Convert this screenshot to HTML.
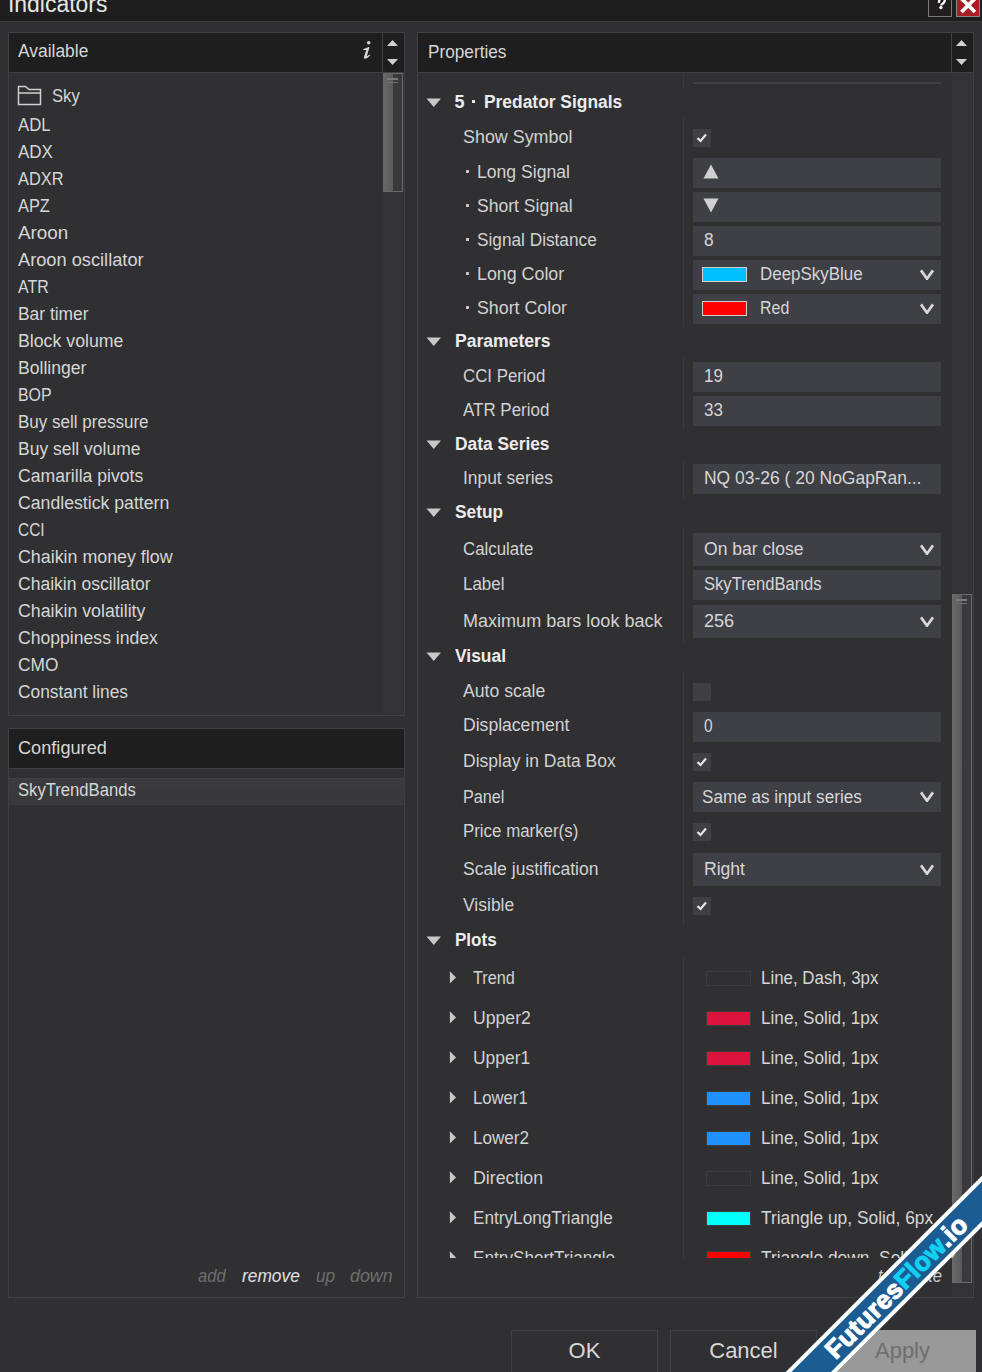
<!DOCTYPE html>
<html><head><meta charset="utf-8"><style>
html,body{margin:0;padding:0}
body{width:982px;height:1372px;background:#303032;position:relative;overflow:hidden;font-family:"Liberation Sans",sans-serif}
.t{position:absolute;font-family:"Liberation Sans",sans-serif;white-space:nowrap;line-height:20px}
.r{position:absolute}
</style></head><body>
<div class="r" style="left:0px;top:0px;width:982px;height:21px;background:#1e1e1e;"></div>
<div class="r" style="left:0px;top:21px;width:982px;height:1px;background:#3c3c40;"></div>
<div class="t" style="left:8.10px;top:-6.1px;font-size:23px;color:#e6e6e6;font-weight:normal;font-style:normal;transform:scaleX(0.9968);transform-origin:0 0;">Indicators</div>
<div class="r" style="left:928px;top:-2px;width:22px;height:18px;background:#221e1f;border:1px solid #7a7a7a;border-top:none"></div>
<svg class="r" style="left:920px;top:0" width="40" height="20" viewBox="920 0 40 20"><path d="M938.9 2.9 Q939.2 -2.6 942.2 -2.4 Q945.4 -2.0 944.6 1.4 Q944.0 3.1 941.6 4.4 L941.4 5.6" fill="none" stroke="#fff" stroke-width="2.3"/><circle cx="940.9" cy="7.6" r="1.7" fill="#fff"/></svg>
<div class="r" style="left:956px;top:-2px;width:22px;height:18px;background:#a81e24;border:1px solid #8a8a8a;border-top:none"></div>
<svg class="r" style="left:956px;top:0px" width="24" height="18" viewBox="0 0 24 18"><path d="M5.5 -1.5 L19 12 M19 -1.5 L5.5 12" stroke="#fff" stroke-width="3.8" stroke-linecap="butt"/></svg>
<div class="r" style="left:8px;top:32px;width:397px;height:684px;background:#303032;box-sizing:border-box;border:1px solid #3f3f46"></div>
<div class="r" style="left:9px;top:33px;width:395px;height:39px;background:#1e1e1e;"></div>
<div class="r" style="left:9px;top:72px;width:395px;height:1px;background:#3f3f46;"></div>
<div class="r" style="left:382px;top:33px;width:1px;height:39px;background:#3f3f46;"></div>
<div class="t" style="left:18.30px;top:41.4px;font-size:18px;color:#d6d6d6;font-weight:normal;font-style:normal;transform:scaleX(0.9669);transform-origin:0 0;">Available</div>
<svg class="r" style="left:362px;top:39px" width="12" height="22" viewBox="0 0 12 22"><circle cx="6.7" cy="3.7" r="1.8" fill="#d4d4d4"/><path d="M1.0 10.2 L6.6 7.9 L7.5 8.2 L4.8 17.3 L7.9 15.6 L8.3 16.3 Q5.6 19.7 3.0 19.8 Q1.6 19.8 1.9 18.3 L4.2 10.9 L1.3 11.0 Z" fill="#d4d4d4"/></svg>
<svg class="r" style="left:386px;top:39px" width="13" height="28" viewBox="0 0 13 28"><path d="M1 7 L6.5 1 L12 7 Z M1 20 L12 20 L6.5 26 Z" fill="#cfcfcf"/></svg>
<div class="r" style="left:383px;top:73px;width:20px;height:642px;background:#333335;"></div>
<div class="r" style="left:383px;top:73px;width:20px;height:119px;box-sizing:border-box;border:1px solid #6a6a6a;border-left:none;background:linear-gradient(to right,#6a6a6a 0,#5a5a5a 10px,#3a3a3c 10px,#3a3a3c 100%)"></div>
<div class="r" style="left:387px;top:78px;width:11px;height:2px;background:#7a7a7a;"></div>
<div class="r" style="left:387px;top:82px;width:11px;height:1px;background:#707070;"></div>
<svg class="r" style="left:17px;top:85px" width="26" height="22" viewBox="0 0 26 22"><path d="M1.5 1.5 H8.5 L12 4.5 H23.5 V19.5 H1.5 Z M1.5 8 H23.5" fill="none" stroke="#d0d0d0" stroke-width="1.5"/></svg>
<div class="t" style="left:51.50px;top:86.0px;font-size:18px;color:#d6d6d6;font-weight:normal;font-style:normal;transform:scaleX(0.9232);transform-origin:0 0;">Sky</div>
<div class="t" style="left:18.20px;top:115.0px;font-size:18px;color:#d6d6d6;font-weight:normal;font-style:normal;transform:scaleX(0.9284);transform-origin:0 0;">ADL</div>
<div class="t" style="left:18.20px;top:142.0px;font-size:18px;color:#d6d6d6;font-weight:normal;font-style:normal;transform:scaleX(0.9431);transform-origin:0 0;">ADX</div>
<div class="t" style="left:18.20px;top:169.0px;font-size:18px;color:#d6d6d6;font-weight:normal;font-style:normal;transform:scaleX(0.9098);transform-origin:0 0;">ADXR</div>
<div class="t" style="left:18.20px;top:196.0px;font-size:18px;color:#d6d6d6;font-weight:normal;font-style:normal;transform:scaleX(0.9083);transform-origin:0 0;">APZ</div>
<div class="t" style="left:18.20px;top:223.0px;font-size:18px;color:#d6d6d6;font-weight:normal;font-style:normal;transform:scaleX(1.0463);transform-origin:0 0;">Aroon</div>
<div class="t" style="left:18.20px;top:250.0px;font-size:18px;color:#d6d6d6;font-weight:normal;font-style:normal;transform:scaleX(1.0124);transform-origin:0 0;">Aroon oscillator</div>
<div class="t" style="left:18.20px;top:277.0px;font-size:18px;color:#d6d6d6;font-weight:normal;font-style:normal;transform:scaleX(0.8856);transform-origin:0 0;">ATR</div>
<div class="t" style="left:18.20px;top:304.0px;font-size:18px;color:#d6d6d6;font-weight:normal;font-style:normal;transform:scaleX(0.9669);transform-origin:0 0;">Bar timer</div>
<div class="t" style="left:18.20px;top:331.0px;font-size:18px;color:#d6d6d6;font-weight:normal;font-style:normal;transform:scaleX(0.9848);transform-origin:0 0;">Block volume</div>
<div class="t" style="left:18.20px;top:358.0px;font-size:18px;color:#d6d6d6;font-weight:normal;font-style:normal;transform:scaleX(0.9765);transform-origin:0 0;">Bollinger</div>
<div class="t" style="left:18.20px;top:385.0px;font-size:18px;color:#d6d6d6;font-weight:normal;font-style:normal;transform:scaleX(0.8841);transform-origin:0 0;">BOP</div>
<div class="t" style="left:18.20px;top:412.0px;font-size:18px;color:#d6d6d6;font-weight:normal;font-style:normal;transform:scaleX(0.9453);transform-origin:0 0;">Buy sell pressure</div>
<div class="t" style="left:18.20px;top:439.0px;font-size:18px;color:#d6d6d6;font-weight:normal;font-style:normal;transform:scaleX(0.9719);transform-origin:0 0;">Buy sell volume</div>
<div class="t" style="left:18.20px;top:466.0px;font-size:18px;color:#d6d6d6;font-weight:normal;font-style:normal;transform:scaleX(0.9778);transform-origin:0 0;">Camarilla pivots</div>
<div class="t" style="left:18.20px;top:493.0px;font-size:18px;color:#d6d6d6;font-weight:normal;font-style:normal;transform:scaleX(0.9819);transform-origin:0 0;">Candlestick pattern</div>
<div class="t" style="left:18.20px;top:520.0px;font-size:18px;color:#d6d6d6;font-weight:normal;font-style:normal;transform:scaleX(0.8567);transform-origin:0 0;">CCI</div>
<div class="t" style="left:18.20px;top:547.0px;font-size:18px;color:#d6d6d6;font-weight:normal;font-style:normal;transform:scaleX(0.9900);transform-origin:0 0;">Chaikin money flow</div>
<div class="t" style="left:18.20px;top:574.0px;font-size:18px;color:#d6d6d6;font-weight:normal;font-style:normal;transform:scaleX(0.9746);transform-origin:0 0;">Chaikin oscillator</div>
<div class="t" style="left:18.20px;top:601.0px;font-size:18px;color:#d6d6d6;font-weight:normal;font-style:normal;transform:scaleX(0.9872);transform-origin:0 0;">Chaikin volatility</div>
<div class="t" style="left:18.20px;top:628.0px;font-size:18px;color:#d6d6d6;font-weight:normal;font-style:normal;transform:scaleX(0.9777);transform-origin:0 0;">Choppiness index</div>
<div class="t" style="left:18.20px;top:655.0px;font-size:18px;color:#d6d6d6;font-weight:normal;font-style:normal;transform:scaleX(0.9621);transform-origin:0 0;">CMO</div>
<div class="t" style="left:18.20px;top:682.0px;font-size:18px;color:#d6d6d6;font-weight:normal;font-style:normal;transform:scaleX(0.9644);transform-origin:0 0;">Constant lines</div>
<div class="r" style="left:8px;top:728px;width:397px;height:570px;background:#303032;box-sizing:border-box;border:1px solid #3f3f46"></div>
<div class="r" style="left:9px;top:729px;width:395px;height:39px;background:#1e1e1e;"></div>
<div class="r" style="left:9px;top:768px;width:395px;height:1px;background:#3f3f46;"></div>
<div class="t" style="left:18.20px;top:737.8px;font-size:18px;color:#d6d6d6;font-weight:normal;font-style:normal;transform:scaleX(1.0087);transform-origin:0 0;">Configured</div>
<div class="r" style="left:9px;top:778px;width:395px;height:27px;background:linear-gradient(#3c3c40,#38383b);border-top:1px solid #424246;border-bottom:1px solid #3c3c40;box-sizing:border-box"></div>
<div class="t" style="left:18.20px;top:780.4px;font-size:18px;color:#d6d6d6;font-weight:normal;font-style:normal;transform:scaleX(0.9247);transform-origin:0 0;">SkyTrendBands</div>
<div class="t" style="left:197.80px;top:1265.9px;font-size:18px;color:#6e6e6e;font-weight:normal;font-style:italic;transform:scaleX(0.9187);transform-origin:0 0;">add</div>
<div class="t" style="left:242.00px;top:1265.9px;font-size:18px;color:#e0e0e0;font-weight:normal;font-style:italic;transform:scaleX(0.9632);transform-origin:0 0;">remove</div>
<div class="t" style="left:315.50px;top:1265.9px;font-size:18px;color:#6e6e6e;font-weight:normal;font-style:italic;transform:scaleX(0.9495);transform-origin:0 0;">up</div>
<div class="t" style="left:350.20px;top:1265.9px;font-size:18px;color:#6e6e6e;font-weight:normal;font-style:italic;transform:scaleX(0.9902);transform-origin:0 0;">down</div>
<div class="r" style="left:417px;top:32px;width:557px;height:1266px;background:#303032;box-sizing:border-box;border:1px solid #3f3f46"></div>
<div class="r" style="left:418px;top:33px;width:555px;height:39px;background:#1e1e1e;"></div>
<div class="r" style="left:418px;top:72px;width:555px;height:1px;background:#3f3f46;"></div>
<div class="r" style="left:951px;top:33px;width:1px;height:39px;background:#3f3f46;"></div>
<div class="t" style="left:428.00px;top:41.9px;font-size:18px;color:#d6d6d6;font-weight:normal;font-style:normal;transform:scaleX(0.9557);transform-origin:0 0;">Properties</div>
<svg class="r" style="left:955px;top:39px" width="13" height="28" viewBox="0 0 13 28"><path d="M1 7 L6.5 1 L12 7 Z M1 20 L12 20 L6.5 26 Z" fill="#cfcfcf"/></svg>
<div class="r" style="left:952px;top:73px;width:21px;height:1224px;background:#333335;"></div>
<div class="r" style="left:952px;top:594px;width:20px;height:689px;box-sizing:border-box;border:1px solid #6a6a6a;border-left:none;background:linear-gradient(to right,#6a6a6a 0,#5a5a5a 10px,#3a3a3c 10px,#3a3a3c 100%)"></div>
<div class="r" style="left:956px;top:599px;width:11px;height:2px;background:#7a7a7a;"></div>
<div class="r" style="left:956px;top:603px;width:11px;height:1px;background:#707070;"></div>
<div class="r" style="left:0;top:0;width:982px;height:1258px;overflow:hidden;clip-path:inset(73px 0 0 0)">
<div class="r" style="left:693px;top:82px;width:248px;height:2px;background:#3f3f46;"></div>
<div class="r" style="left:683px;top:73px;width:1px;height:15px;background:#3a3a3e;"></div>
<div class="r" style="left:683px;top:117px;width:1px;height:210px;background:#3a3a3e;"></div>
<div class="r" style="left:683px;top:358px;width:1px;height:72px;background:#3a3a3e;"></div>
<div class="r" style="left:683px;top:460px;width:1px;height:38px;background:#3a3a3e;"></div>
<div class="r" style="left:683px;top:528px;width:1px;height:114px;background:#3a3a3e;"></div>
<div class="r" style="left:683px;top:672px;width:1px;height:254px;background:#3a3a3e;"></div>
<div class="r" style="left:683px;top:956px;width:1px;height:302px;background:#3a3a3e;"></div>
<svg class="r" style="left:426px;top:97.6px" width="16" height="10" viewBox="0 0 16 10"><path d="M0.5 0.5 L15 0.5 L7.75 9 Z" fill="#c8c8c8"/></svg>
<div class="t" style="left:454.60px;top:91.6px;font-size:18px;color:#ececec;font-weight:bold;font-style:normal;">5</div>
<div class="r" style="left:472px;top:99.5px;width:3px;height:3px;background:#ececec;border-radius:0.5px"></div>
<div class="t" style="left:483.90px;top:91.6px;font-size:18px;color:#ececec;font-weight:bold;font-style:normal;transform:scaleX(0.9662);transform-origin:0 0;">Predator Signals</div>
<div class="t" style="left:462.80px;top:126.8px;font-size:17.5px;color:#d2d2d2;font-weight:normal;font-style:normal;transform:scaleX(1.0226);transform-origin:0 0;">Show Symbol</div>
<div class="r" style="left:693px;top:129px;width:18px;height:18px;background:#3f3f46;"></div>
<svg class="r" style="left:693px;top:129px" width="18" height="18" viewBox="0 0 18 18"><path d="M4.5 9 L7.5 12 L13 5.5" fill="none" stroke="#e8e8e8" stroke-width="2.2"/></svg>
<div class="r" style="left:466px;top:170px;width:3px;height:3px;background:#c4c4c4;"></div>
<div class="t" style="left:477.40px;top:161.8px;font-size:17.5px;color:#d2d2d2;font-weight:normal;font-style:normal;transform:scaleX(1.0049);transform-origin:0 0;">Long Signal</div>
<div class="r" style="left:693px;top:158px;width:248px;height:30px;background:#3f3f46;"></div>
<svg class="r" style="left:703px;top:164px" width="16" height="15" viewBox="0 0 16 15"><path d="M0.5 14.5 L8 0.5 L15.5 14.5 Z" fill="#d0d0d0"/></svg>
<div class="r" style="left:466px;top:204px;width:3px;height:3px;background:#c4c4c4;"></div>
<div class="t" style="left:477.40px;top:195.5px;font-size:17.5px;color:#d2d2d2;font-weight:normal;font-style:normal;transform:scaleX(1.0037);transform-origin:0 0;">Short Signal</div>
<div class="r" style="left:693px;top:192px;width:248px;height:30px;background:#3f3f46;"></div>
<svg class="r" style="left:703px;top:198px" width="16" height="15" viewBox="0 0 16 15"><path d="M0.5 0.5 L15.5 0.5 L8 14.5 Z" fill="#d0d0d0"/></svg>
<div class="r" style="left:466px;top:238px;width:3px;height:3px;background:#c4c4c4;"></div>
<div class="t" style="left:477.40px;top:229.5px;font-size:17.5px;color:#d2d2d2;font-weight:normal;font-style:normal;transform:scaleX(0.9846);transform-origin:0 0;">Signal Distance</div>
<div class="r" style="left:693px;top:226px;width:248px;height:30px;background:#3f3f46;"></div>
<div class="t" style="left:703.70px;top:229.6px;font-size:17.5px;color:#d6d6d6;font-weight:normal;font-style:normal;transform:scaleX(0.9889);transform-origin:0 0;">8</div>
<div class="r" style="left:466px;top:272px;width:3px;height:3px;background:#c4c4c4;"></div>
<div class="t" style="left:477.40px;top:263.5px;font-size:17.5px;color:#d2d2d2;font-weight:normal;font-style:normal;transform:scaleX(1.0188);transform-origin:0 0;">Long Color</div>
<div class="r" style="left:693px;top:260px;width:248px;height:30px;background:#3f3f46;"></div>
<svg class="r" style="left:919px;top:268.0px" width="16" height="12" viewBox="0 0 16 12"><path d="M2 2.4 L8 10.7 L14 2.4" fill="none" stroke="#d8d8d8" stroke-width="2.7"/></svg>
<div class="r" style="left:702px;top:267px;width:45px;height:15px;background:#00bfff;box-sizing:border-box;border:1px solid #cfcfcf"></div>
<div class="t" style="left:759.80px;top:263.5px;font-size:17.5px;color:#d6d6d6;font-weight:normal;font-style:normal;transform:scaleX(0.9677);transform-origin:0 0;">DeepSkyBlue</div>
<div class="r" style="left:466px;top:306px;width:3px;height:3px;background:#c4c4c4;"></div>
<div class="t" style="left:477.40px;top:297.5px;font-size:17.5px;color:#d2d2d2;font-weight:normal;font-style:normal;transform:scaleX(1.0171);transform-origin:0 0;">Short Color</div>
<div class="r" style="left:693px;top:294px;width:248px;height:30px;background:#3f3f46;"></div>
<svg class="r" style="left:919px;top:302.0px" width="16" height="12" viewBox="0 0 16 12"><path d="M2 2.4 L8 10.7 L14 2.4" fill="none" stroke="#d8d8d8" stroke-width="2.7"/></svg>
<div class="r" style="left:702px;top:301px;width:45px;height:15px;background:#ff0000;box-sizing:border-box;border:1px solid #cfcfcf"></div>
<div class="t" style="left:759.80px;top:297.5px;font-size:17.5px;color:#d6d6d6;font-weight:normal;font-style:normal;transform:scaleX(0.9117);transform-origin:0 0;">Red</div>
<svg class="r" style="left:426px;top:337.4px" width="16" height="10" viewBox="0 0 16 10"><path d="M0.5 0.5 L15 0.5 L7.75 9 Z" fill="#c8c8c8"/></svg>
<div class="t" style="left:454.60px;top:331.4px;font-size:18px;color:#ececec;font-weight:bold;font-style:normal;transform:scaleX(0.9749);transform-origin:0 0;">Parameters</div>
<div class="t" style="left:462.80px;top:365.6px;font-size:17.5px;color:#d2d2d2;font-weight:normal;font-style:normal;transform:scaleX(0.9617);transform-origin:0 0;">CCI Period</div>
<div class="r" style="left:693px;top:362px;width:248px;height:30px;background:#3f3f46;"></div>
<div class="t" style="left:704.30px;top:365.6px;font-size:17.5px;color:#d6d6d6;font-weight:normal;font-style:normal;transform:scaleX(0.9662);transform-origin:0 0;">19</div>
<div class="t" style="left:462.80px;top:399.6px;font-size:17.5px;color:#d2d2d2;font-weight:normal;font-style:normal;transform:scaleX(0.9681);transform-origin:0 0;">ATR Period</div>
<div class="r" style="left:693px;top:396px;width:248px;height:30px;background:#3f3f46;"></div>
<div class="t" style="left:703.70px;top:399.6px;font-size:17.5px;color:#d6d6d6;font-weight:normal;font-style:normal;transform:scaleX(0.9716);transform-origin:0 0;">33</div>
<svg class="r" style="left:426px;top:439.5px" width="16" height="10" viewBox="0 0 16 10"><path d="M0.5 0.5 L15 0.5 L7.75 9 Z" fill="#c8c8c8"/></svg>
<div class="t" style="left:454.60px;top:433.5px;font-size:18px;color:#ececec;font-weight:bold;font-style:normal;transform:scaleX(0.9638);transform-origin:0 0;">Data Series</div>
<div class="t" style="left:462.80px;top:467.5px;font-size:17.5px;color:#d2d2d2;font-weight:normal;font-style:normal;transform:scaleX(0.9943);transform-origin:0 0;">Input series</div>
<div class="r" style="left:693px;top:464px;width:248px;height:30px;background:#3f3f46;"></div>
<div class="t" style="left:703.70px;top:467.6px;font-size:17.5px;color:#d6d6d6;font-weight:normal;font-style:normal;transform:scaleX(0.9980);transform-origin:0 0;">NQ 03-26 ( 20 NoGapRan...</div>
<svg class="r" style="left:426px;top:507.5px" width="16" height="10" viewBox="0 0 16 10"><path d="M0.5 0.5 L15 0.5 L7.75 9 Z" fill="#c8c8c8"/></svg>
<div class="t" style="left:454.60px;top:501.5px;font-size:18px;color:#ececec;font-weight:bold;font-style:normal;transform:scaleX(0.9619);transform-origin:0 0;">Setup</div>
<div class="t" style="left:462.80px;top:538.6px;font-size:17.5px;color:#d2d2d2;font-weight:normal;font-style:normal;transform:scaleX(0.9637);transform-origin:0 0;">Calculate</div>
<div class="r" style="left:693px;top:533px;width:248px;height:33px;background:#3f3f46;"></div>
<div class="t" style="left:703.70px;top:538.6px;font-size:17.5px;color:#d6d6d6;font-weight:normal;font-style:normal;transform:scaleX(1.0032);transform-origin:0 0;">On bar close</div>
<svg class="r" style="left:919px;top:542.5px" width="16" height="12" viewBox="0 0 16 12"><path d="M2 2.4 L8 10.7 L14 2.4" fill="none" stroke="#d8d8d8" stroke-width="2.7"/></svg>
<div class="t" style="left:462.80px;top:573.8px;font-size:17.5px;color:#d2d2d2;font-weight:normal;font-style:normal;transform:scaleX(0.9683);transform-origin:0 0;">Label</div>
<div class="r" style="left:693px;top:570px;width:248px;height:30px;background:#3f3f46;"></div>
<div class="t" style="left:703.70px;top:573.8px;font-size:17.5px;color:#d6d6d6;font-weight:normal;font-style:normal;transform:scaleX(0.9484);transform-origin:0 0;">SkyTrendBands</div>
<div class="t" style="left:462.80px;top:610.8px;font-size:17.5px;color:#d2d2d2;font-weight:normal;font-style:normal;transform:scaleX(1.0310);transform-origin:0 0;">Maximum bars look back</div>
<div class="r" style="left:693px;top:605px;width:248px;height:33px;background:#3f3f46;"></div>
<div class="t" style="left:703.70px;top:610.8px;font-size:17.5px;color:#d6d6d6;font-weight:normal;font-style:normal;transform:scaleX(1.0293);transform-origin:0 0;">256</div>
<svg class="r" style="left:919px;top:614.5px" width="16" height="12" viewBox="0 0 16 12"><path d="M2 2.4 L8 10.7 L14 2.4" fill="none" stroke="#d8d8d8" stroke-width="2.7"/></svg>
<svg class="r" style="left:426px;top:651.7px" width="16" height="10" viewBox="0 0 16 10"><path d="M0.5 0.5 L15 0.5 L7.75 9 Z" fill="#c8c8c8"/></svg>
<div class="t" style="left:454.60px;top:645.7px;font-size:18px;color:#ececec;font-weight:bold;font-style:normal;transform:scaleX(0.9672);transform-origin:0 0;">Visual</div>
<div class="t" style="left:462.80px;top:680.7px;font-size:17.5px;color:#d2d2d2;font-weight:normal;font-style:normal;transform:scaleX(1.0076);transform-origin:0 0;">Auto scale</div>
<div class="r" style="left:693px;top:683px;width:18px;height:18px;background:#3f3f46;"></div>
<div class="t" style="left:462.80px;top:715.2px;font-size:17.5px;color:#d2d2d2;font-weight:normal;font-style:normal;transform:scaleX(1.0042);transform-origin:0 0;">Displacement</div>
<div class="r" style="left:693px;top:712px;width:248px;height:30px;background:#3f3f46;"></div>
<div class="t" style="left:703.70px;top:715.6px;font-size:17.5px;color:#d6d6d6;font-weight:normal;font-style:normal;transform:scaleX(0.8900);transform-origin:0 0;">0</div>
<div class="t" style="left:462.80px;top:750.7px;font-size:17.5px;color:#d2d2d2;font-weight:normal;font-style:normal;transform:scaleX(1.0003);transform-origin:0 0;">Display in Data Box</div>
<div class="r" style="left:693px;top:753px;width:18px;height:18px;background:#3f3f46;"></div>
<svg class="r" style="left:693px;top:753px" width="18" height="18" viewBox="0 0 18 18"><path d="M4.5 9 L7.5 12 L13 5.5" fill="none" stroke="#e8e8e8" stroke-width="2.2"/></svg>
<div class="t" style="left:462.80px;top:786.9px;font-size:17.5px;color:#d2d2d2;font-weight:normal;font-style:normal;transform:scaleX(0.9255);transform-origin:0 0;">Panel</div>
<div class="r" style="left:693px;top:782px;width:248px;height:30px;background:#3f3f46;"></div>
<div class="t" style="left:702.30px;top:786.9px;font-size:17.5px;color:#d6d6d6;font-weight:normal;font-style:normal;transform:scaleX(0.9776);transform-origin:0 0;">Same as input series</div>
<svg class="r" style="left:919px;top:790.0px" width="16" height="12" viewBox="0 0 16 12"><path d="M2 2.4 L8 10.7 L14 2.4" fill="none" stroke="#d8d8d8" stroke-width="2.7"/></svg>
<div class="t" style="left:462.80px;top:820.7px;font-size:17.5px;color:#d2d2d2;font-weight:normal;font-style:normal;transform:scaleX(0.9641);transform-origin:0 0;">Price marker(s)</div>
<div class="r" style="left:693px;top:823px;width:18px;height:18px;background:#3f3f46;"></div>
<svg class="r" style="left:693px;top:823px" width="18" height="18" viewBox="0 0 18 18"><path d="M4.5 9 L7.5 12 L13 5.5" fill="none" stroke="#e8e8e8" stroke-width="2.2"/></svg>
<div class="t" style="left:462.80px;top:858.7px;font-size:17.5px;color:#d2d2d2;font-weight:normal;font-style:normal;transform:scaleX(1.0024);transform-origin:0 0;">Scale justification</div>
<div class="r" style="left:693px;top:853px;width:248px;height:33px;background:#3f3f46;"></div>
<div class="t" style="left:703.70px;top:858.7px;font-size:17.5px;color:#d6d6d6;font-weight:normal;font-style:normal;transform:scaleX(1.0027);transform-origin:0 0;">Right</div>
<svg class="r" style="left:919px;top:862.5px" width="16" height="12" viewBox="0 0 16 12"><path d="M2 2.4 L8 10.7 L14 2.4" fill="none" stroke="#d8d8d8" stroke-width="2.7"/></svg>
<div class="t" style="left:462.80px;top:894.7px;font-size:17.5px;color:#d2d2d2;font-weight:normal;font-style:normal;transform:scaleX(0.9999);transform-origin:0 0;">Visible</div>
<div class="r" style="left:693px;top:897px;width:18px;height:18px;background:#3f3f46;"></div>
<svg class="r" style="left:693px;top:897px" width="18" height="18" viewBox="0 0 18 18"><path d="M4.5 9 L7.5 12 L13 5.5" fill="none" stroke="#e8e8e8" stroke-width="2.2"/></svg>
<svg class="r" style="left:426px;top:935.6px" width="16" height="10" viewBox="0 0 16 10"><path d="M0.5 0.5 L15 0.5 L7.75 9 Z" fill="#c8c8c8"/></svg>
<div class="t" style="left:454.60px;top:929.6px;font-size:18px;color:#ececec;font-weight:bold;font-style:normal;transform:scaleX(0.9455);transform-origin:0 0;">Plots</div>
<svg class="r" style="left:449px;top:971.4px" width="8" height="14" viewBox="0 0 8 14"><path d="M0.9 0.3 L7.0 6.4 L0.9 12.5 Z" fill="#c8c8c8"/></svg>
<div class="t" style="left:472.80px;top:967.8px;font-size:17.5px;color:#d2d2d2;font-weight:normal;font-style:normal;transform:scaleX(0.9293);transform-origin:0 0;">Trend</div>
<div class="r" style="left:706px;top:971px;width:45px;height:15px;background:transparent;box-sizing:border-box;border:1px solid #3c3c40"></div>
<div class="t" style="left:760.60px;top:967.8px;font-size:17.5px;color:#d6d6d6;font-weight:normal;font-style:normal;transform:scaleX(0.9651);transform-origin:0 0;">Line, Dash, 3px</div>
<svg class="r" style="left:449px;top:1011.4px" width="8" height="14" viewBox="0 0 8 14"><path d="M0.9 0.3 L7.0 6.4 L0.9 12.5 Z" fill="#c8c8c8"/></svg>
<div class="t" style="left:472.80px;top:1007.8px;font-size:17.5px;color:#d2d2d2;font-weight:normal;font-style:normal;transform:scaleX(1.0077);transform-origin:0 0;">Upper2</div>
<div class="r" style="left:706px;top:1011px;width:45px;height:15px;background:#dc143c;box-sizing:border-box;border:1px solid #3c3c40"></div>
<div class="t" style="left:760.60px;top:1007.8px;font-size:17.5px;color:#d6d6d6;font-weight:normal;font-style:normal;transform:scaleX(0.9807);transform-origin:0 0;">Line, Solid, 1px</div>
<svg class="r" style="left:449px;top:1051.4px" width="8" height="14" viewBox="0 0 8 14"><path d="M0.9 0.3 L7.0 6.4 L0.9 12.5 Z" fill="#c8c8c8"/></svg>
<div class="t" style="left:472.80px;top:1047.8px;font-size:17.5px;color:#d2d2d2;font-weight:normal;font-style:normal;transform:scaleX(0.9953);transform-origin:0 0;">Upper1</div>
<div class="r" style="left:706px;top:1051px;width:45px;height:15px;background:#dc143c;box-sizing:border-box;border:1px solid #3c3c40"></div>
<div class="t" style="left:760.60px;top:1047.8px;font-size:17.5px;color:#d6d6d6;font-weight:normal;font-style:normal;transform:scaleX(0.9807);transform-origin:0 0;">Line, Solid, 1px</div>
<svg class="r" style="left:449px;top:1091.4px" width="8" height="14" viewBox="0 0 8 14"><path d="M0.9 0.3 L7.0 6.4 L0.9 12.5 Z" fill="#c8c8c8"/></svg>
<div class="t" style="left:472.80px;top:1087.8px;font-size:17.5px;color:#d2d2d2;font-weight:normal;font-style:normal;transform:scaleX(0.9530);transform-origin:0 0;">Lower1</div>
<div class="r" style="left:706px;top:1091px;width:45px;height:15px;background:#1e90ff;box-sizing:border-box;border:1px solid #3c3c40"></div>
<div class="t" style="left:760.60px;top:1087.8px;font-size:17.5px;color:#d6d6d6;font-weight:normal;font-style:normal;transform:scaleX(0.9807);transform-origin:0 0;">Line, Solid, 1px</div>
<svg class="r" style="left:449px;top:1131.4px" width="8" height="14" viewBox="0 0 8 14"><path d="M0.9 0.3 L7.0 6.4 L0.9 12.5 Z" fill="#c8c8c8"/></svg>
<div class="t" style="left:472.80px;top:1127.8px;font-size:17.5px;color:#d2d2d2;font-weight:normal;font-style:normal;transform:scaleX(0.9742);transform-origin:0 0;">Lower2</div>
<div class="r" style="left:706px;top:1131px;width:45px;height:15px;background:#1e90ff;box-sizing:border-box;border:1px solid #3c3c40"></div>
<div class="t" style="left:760.60px;top:1127.8px;font-size:17.5px;color:#d6d6d6;font-weight:normal;font-style:normal;transform:scaleX(0.9807);transform-origin:0 0;">Line, Solid, 1px</div>
<svg class="r" style="left:449px;top:1171.4px" width="8" height="14" viewBox="0 0 8 14"><path d="M0.9 0.3 L7.0 6.4 L0.9 12.5 Z" fill="#c8c8c8"/></svg>
<div class="t" style="left:472.80px;top:1167.8px;font-size:17.5px;color:#d2d2d2;font-weight:normal;font-style:normal;transform:scaleX(1.0158);transform-origin:0 0;">Direction</div>
<div class="r" style="left:706px;top:1171px;width:45px;height:15px;background:transparent;box-sizing:border-box;border:1px solid #3c3c40"></div>
<div class="t" style="left:760.60px;top:1167.8px;font-size:17.5px;color:#d6d6d6;font-weight:normal;font-style:normal;transform:scaleX(0.9807);transform-origin:0 0;">Line, Solid, 1px</div>
<svg class="r" style="left:449px;top:1211.4px" width="8" height="14" viewBox="0 0 8 14"><path d="M0.9 0.3 L7.0 6.4 L0.9 12.5 Z" fill="#c8c8c8"/></svg>
<div class="t" style="left:472.80px;top:1207.8px;font-size:17.5px;color:#d2d2d2;font-weight:normal;font-style:normal;transform:scaleX(0.9815);transform-origin:0 0;">EntryLongTriangle</div>
<div class="r" style="left:706px;top:1211px;width:45px;height:15px;background:#00ffff;box-sizing:border-box;border:1px solid #3c3c40"></div>
<div class="t" style="left:760.60px;top:1207.8px;font-size:17.5px;color:#d6d6d6;font-weight:normal;font-style:normal;transform:scaleX(0.9924);transform-origin:0 0;">Triangle up, Solid, 6px</div>
<svg class="r" style="left:449px;top:1251.4px" width="8" height="14" viewBox="0 0 8 14"><path d="M0.9 0.3 L7.0 6.4 L0.9 12.5 Z" fill="#c8c8c8"/></svg>
<div class="t" style="left:472.80px;top:1247.8px;font-size:17.5px;color:#d2d2d2;font-weight:normal;font-style:normal;transform:scaleX(0.9785);transform-origin:0 0;">EntryShortTriangle</div>
<div class="r" style="left:706px;top:1251px;width:45px;height:15px;background:#ff0000;box-sizing:border-box;border:1px solid #3c3c40"></div>
<div class="t" style="left:760.60px;top:1247.8px;font-size:17.5px;color:#d6d6d6;font-weight:normal;font-style:normal;transform:scaleX(0.9924);transform-origin:0 0;">Triangle down, Solid, 6px</div>
</div>
<div class="t" style="left:878.00px;top:1265.6px;font-size:18px;color:#c8c8c8;font-weight:normal;font-style:italic;transform:scaleX(0.9272);transform-origin:0 0;">template</div>
<div class="r" style="left:511px;top:1330px;width:147px;height:50px;background:transparent;box-sizing:border-box;border:1px solid #3f3f46"></div>
<div class="r" style="left:670px;top:1330px;width:147px;height:50px;background:transparent;box-sizing:border-box;border:1px solid #3f3f46"></div>
<div class="r" style="left:829px;top:1330px;width:147px;height:50px;background:#999999;"></div>
<div class="t" style="left:511px;top:1337px;width:147px;text-align:center;font-size:22px;color:#d8d8d8;line-height:28px">OK</div>
<div class="t" style="left:670px;top:1337px;width:147px;text-align:center;font-size:22px;color:#d8d8d8;line-height:28px">Cancel</div>
<div class="t" style="left:829px;top:1337px;width:147px;text-align:center;font-size:22px;color:#6e6e6e;line-height:28px">Apply</div>
<div class="r" style="left:696px;top:1268.5px;width:400px;height:36px;box-sizing:border-box;background:#1b5c92;border-top:4.5px solid #fff;border-bottom:4.5px solid #fff;transform:rotate(-45deg);transform-origin:200px 17.5px;display:flex;align-items:center;justify-content:center"><span style="font-family:'Liberation Sans',sans-serif;font-weight:bold;font-size:26px;letter-spacing:0.4px;-webkit-text-stroke:1.1px currentColor;color:#fff;line-height:27px;white-space:nowrap">Futures<span style="color:#12d0f2">Flow</span>.io</span></div>
</body></html>
